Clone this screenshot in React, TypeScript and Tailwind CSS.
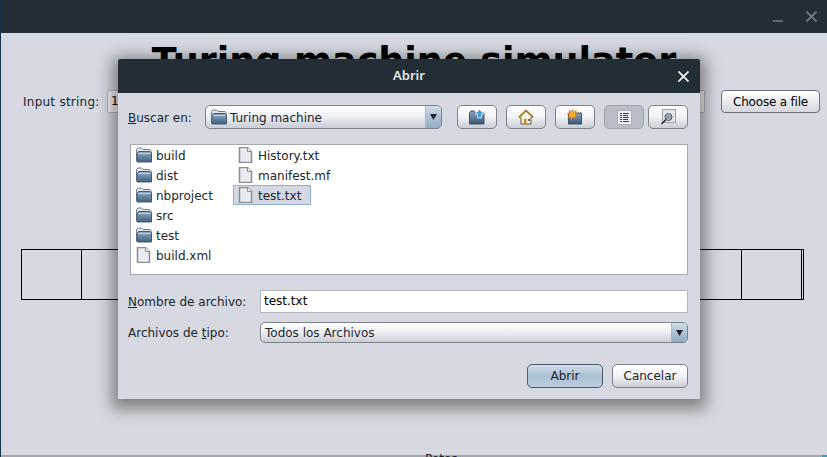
import React from "react";

const Folder = () => (
  <svg width="16" height="16" viewBox="0 0 16 16" className="shrink-0">
    <defs>
      <linearGradient id="fg" x1="0" y1="0" x2="0" y2="1">
        <stop offset="0" stopColor="#93abc3" />
        <stop offset="1" stopColor="#3f607f" />
      </linearGradient>
    </defs>
    <path d="M0.500 14V2.500L2 1h3.500L7 2.500h7l1 1V14z" fill="#e4e8ed" stroke="#6f7d8b" />
    <path d="M1 15V7l1.500-2.500H14L15.500 6v9z" fill="url(#fg)" stroke="#435a70" />
    <path d="M2 6.500h12.500" stroke="#c3d0dc" />
  </svg>
);

const FileIcon = () => (
  <svg width="16" height="16" viewBox="0 0 16 16" className="shrink-0">
    <path d="M1.500 0.500h8l4 4v11h-12z" fill="#e9edf3" stroke="#8a8d91" strokeWidth="1.500" />
    <path d="M9.500 0.500v4h4" fill="#fbfcfd" stroke="#8a8d91" />
  </svg>
);

const Row = ({ icon, label, selected }: { icon: React.ReactNode; label: string; selected?: boolean }) => (
  <div className={"flex items-center h-5 gap-[4px] pl-[5px] " + (selected ? "w-[78px] bg-[#d3d8e3] outline outline-1 -outline-offset-1 outline-[#8db0d2]" : "")}>
    {icon}
    <span className="text-[#20262c] pt-[1px]">{label}</span>
  </div>
);

const ToolBtn = ({ children, pressed }: { children: React.ReactNode; pressed?: boolean }) => (
  <div
    className={
      "w-10 h-6 rounded-[5px] border flex items-center justify-center " +
      (pressed
        ? "border-[#a0a5ac] bg-[#b9bdc6]"
        : "border-[#7d8288] bg-gradient-to-b from-[#ffffff] via-[#f2f3f6] to-[#c9cdd5]")
    }
  >
    {children}
  </div>
);

const Arrow = () => (
  <svg width="7" height="6" viewBox="0 0 7 6"><path d="M0 0h7L3.500 6z" fill="#20262c" /></svg>
);

export default function App() {
  return (
    <div className="relative w-[827px] h-[457px] overflow-hidden bg-[#d6d9e1] border-l border-[#16324a] font-['DejaVu_Sans',sans-serif] text-[12px] text-[#20262c]">
      <div className="h-[33px] bg-[#222d35] flex items-center justify-end pr-[10px] gap-[23px]">
        <div className="w-[10px] h-[2px] bg-[#5b666e] mt-[8px]" />
        <svg className="-mt-[1px]" width="11" height="11" viewBox="0 0 11 11"><path d="M0.500 0.500l10 10M10.500 0.500l-10 10" stroke="#6b7780" strokeWidth="2" /></svg>
      </div>
      <div className="flex justify-center mt-[4px] h-[21px]">
        <span className="text-[36.5px] leading-[50px] font-bold text-black whitespace-nowrap">Turing machine simulator</span>
      </div>
      <div className="flex items-center h-[23px] mt-[32px] pl-[22px]">
        <span className="w-[84px] tracking-[0.25px]">Input string:</span>
        <div className="w-[598px] h-[23px] bg-[#f5f5f7] border border-[#b4b7bd] rounded-[2px] pl-[3px] leading-[21px] text-black">1</div>
        <div className="ml-[16px] w-[99px] h-[23px] rounded-[4px] border border-[#6d7177] bg-gradient-to-b from-white to-[#d4d7de] flex items-center justify-center text-black tracking-[-0.2px]">Choose a file</div>
      </div>
      <div className="mt-[136px] ml-[20px] flex w-[783px] h-[51px] border border-black">
        <div className="w-[60px] border-r border-black" />
        <div className="w-[660px] border-r border-black" />
        <div className="w-[60px] border-r border-black" />
      </div>

      <div className="absolute left-0 right-0 bottom-0 h-[2px] bg-[#a3a6ac]">
        <div className="absolute right-0 top-0 bottom-0 w-[5px] bg-[#3f9fb0]" />
      </div>
      <div className="absolute left-[424px] top-[450px] text-[12px] text-[#20262c]">Petos</div>

      <div className="absolute left-[117px] top-[59px] w-[582px] h-[340px] bg-[#d6d9e1] rounded-t-[2px] shadow-[0_4px_16px_6px_rgba(0,0,0,0.42)] flex flex-col">
        <div className="h-[34px] bg-[#222d35] rounded-t-[2px] flex items-center justify-center relative text-[13px]">
          <span className="text-[#e8eaec] font-semibold font-['Noto_Sans',sans-serif]">Abrir</span>
          <svg className="absolute right-[11px] top-[12px]" width="11" height="11" viewBox="0 0 11 11"><path d="M0.500 0.500l10 10M10.500 0.500l-10 10" stroke="#f0f2f4" strokeWidth="1.800" /></svg>
        </div>

        <div className="flex items-center mt-[12px] pl-[10px] h-[24px]">
          <span className="w-[77px] pt-[1px]"><u>B</u>uscar en:</span>
          <div className="w-[237px] h-[24px] rounded-[5px] border border-[#7d8288] bg-gradient-to-b from-white via-[#eceef2] to-[#c9cdd5] flex items-center pl-[5px] gap-[3px] relative">
            <Folder />
            <span className="text-[#20262c] pt-[1px]">Turing machine</span>
            <div className="absolute right-0 top-0 bottom-0 w-[16px] rounded-r-[4px] bg-gradient-to-b from-[#cfdbe8] to-[#8fabc5] border-l border-[#a9b7c6] flex items-center justify-center"><Arrow /></div>
          </div>
          <div className="flex gap-[9px] ml-[15px]">
            <ToolBtn>
              <svg width="16" height="16" viewBox="0 0 16 16">
                <defs>
                  <linearGradient id="tf" x1="0" y1="0" x2="0" y2="1">
                    <stop offset="0" stopColor="#8fa8c0" />
                    <stop offset="1" stopColor="#365674" />
                  </linearGradient>
                </defs>
                <path d="M0.500 15V4l1.500-2h3l1 2h9v11z" fill="url(#tf)" stroke="#3d5266" />
                <path d="M10.500 0.500l4.500 4.500h-2.500v4h-4V5H6z" fill="#3f9be0" stroke="#ffffff" strokeWidth="0.700" />
              </svg>
            </ToolBtn>
            <ToolBtn>
              <svg width="16" height="16" viewBox="0 0 16 16">
                <path d="M3 8v7h10V8" fill="#f4f0dc" stroke="#6f5a20" />
                <path d="M0.800 8.500L8 1.500l7.200 7" fill="none" stroke="#b98f28" strokeWidth="1.800" />
                <path d="M0.800 8.500L8 1.500l7.200 7" fill="none" stroke="#4b3a10" strokeWidth="0.400" />
                <rect x="6" y="10" width="2.500" height="5" fill="#c08a2e" />
                <rect x="10" y="10" width="2" height="2" fill="#4a6f98" />
              </svg>
            </ToolBtn>
            <ToolBtn>
              <svg width="16" height="16" viewBox="0 0 16 16">
                <path d="M1.500 15V4h13v11z" fill="url(#tf)" stroke="#3d5266" />
                <path d="M5.500 0l1 3 3-1.500-1.500 3 3 1-3 1 1 3-3-1.500-1.500 3-.8-3-3 .8 1.800-2.500-2.500-1.500 3-.5-1-3 2.800 1.500z" fill="#f6b02c" stroke="#e8581a" strokeWidth="0.500" />
              </svg>
            </ToolBtn>
            <div className="flex gap-[4px]">
              <ToolBtn pressed>
                <svg width="15" height="15" viewBox="0 0 15 15">
                  <rect x="0.500" y="0.500" width="14" height="14" fill="#eef1f6" stroke="#a8afb8" />
                  <path d="M3 3.500h2M6 3.500h6M3 5.500h2M6 5.500h5M3 7.500h2M6 7.500h6M3 9.500h2M6 9.500h5M3 11.500h2M6 11.500h6" stroke="#39424c" />
                </svg>
              </ToolBtn>
              <ToolBtn>
                <svg width="16" height="16" viewBox="0 0 16 16">
                  <rect x="2.500" y="0.500" width="13" height="13" fill="#e3e7ec" stroke="#9aa1a9" />
                  <circle cx="8.500" cy="8" r="3.500" fill="#b6c4d2" stroke="#505a64" />
                  <path d="M6 10.500L1.500 15" stroke="#20262c" strokeWidth="1.500" />
                  <path d="M6 7h5M6 9h5" stroke="#505a64" strokeWidth="0.700" />
                </svg>
              </ToolBtn>
            </div>
          </div>
        </div>

        <div className="mx-[12px] mt-[15px] w-[558px] h-[131px] bg-white border border-[#a5a8ae] flex">
          <div className="w-[102px] flex flex-col">
            <Row icon={<Folder />} label="build" />
            <Row icon={<Folder />} label="dist" />
            <Row icon={<Folder />} label="nbproject" />
            <Row icon={<Folder />} label="src" />
            <Row icon={<Folder />} label="test" />
            <Row icon={<FileIcon />} label="build.xml" />
          </div>
          <div className="flex flex-col">
            <Row icon={<FileIcon />} label="History.txt" />
            <Row icon={<FileIcon />} label="manifest.mf" />
            <Row icon={<FileIcon />} label="test.txt" selected />
          </div>
        </div>

        <div className="flex items-center mt-[15px] pl-[10px] h-[23px]">
          <span className="w-[132px] pt-[1px]"><u>N</u>ombre de archivo:</span>
          <div className="w-[428px] h-[23px] bg-white border border-[#b4b7bd] pl-[3px] leading-[21px] text-black">test.txt</div>
        </div>
        <div className="flex items-center mt-[9px] pl-[10px] h-[21px]">
          <span className="w-[132px] pt-[1px]">Archivos de <u>t</u>ipo:</span>
          <div className="w-[428px] h-[21px] rounded-[5px] border border-[#7d8288] bg-gradient-to-b from-white via-[#eceef2] to-[#c9cdd5] pl-[4px] leading-[21px] relative">
            Todos los Archivos
            <div className="absolute right-0 top-0 bottom-0 w-[16px] rounded-r-[4px] bg-gradient-to-b from-[#cfdbe8] to-[#8fabc5] border-l border-[#a9b7c6] flex items-center justify-center"><Arrow /></div>
          </div>
        </div>
        <div className="flex justify-end gap-[9px] mt-[21px] pr-[12px]">
          <div className="w-[76px] h-[24px] rounded-[5px] border border-[#4c5c6c] bg-gradient-to-b from-[#d3deea] via-[#aac0d5] to-[#bccde0] flex items-center justify-center">Abrir</div>
          <div className="w-[76px] h-[24px] rounded-[5px] border border-[#7d8288] bg-gradient-to-b from-white via-[#f2f3f6] to-[#c9cdd5] flex items-center justify-center">Cancelar</div>
        </div>
      </div>
    </div>
  );
}
